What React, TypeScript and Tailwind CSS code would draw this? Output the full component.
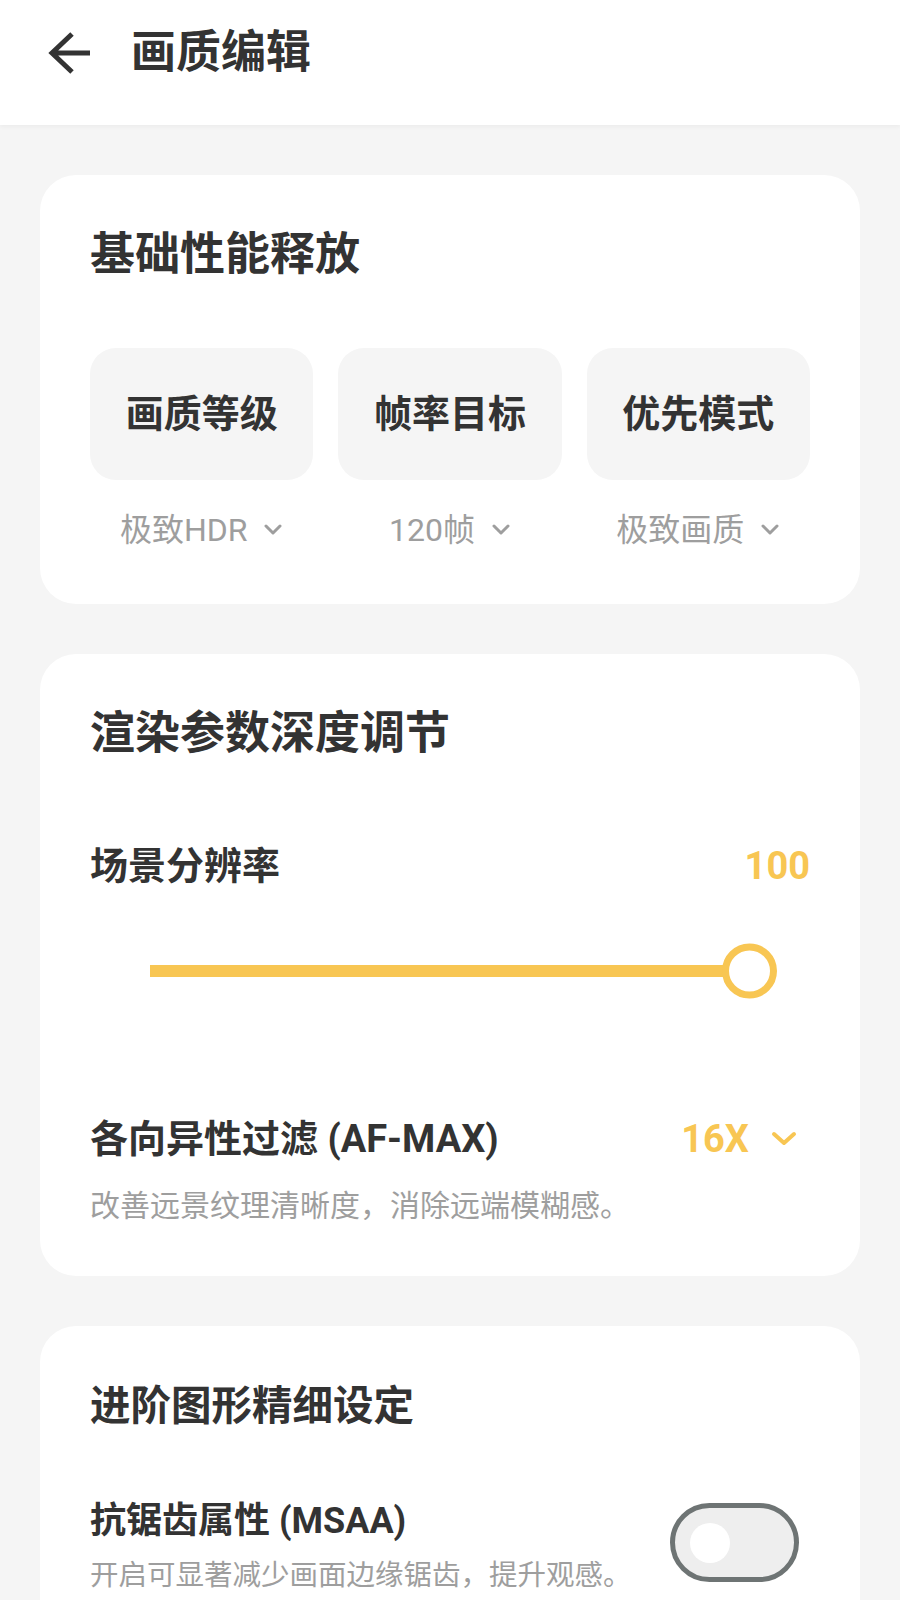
import React from "react";

const FONT = { fontFamily: 'Roboto, "Noto Sans CJK SC", "Noto Sans", sans-serif' };

function Chevron({ className = "" }: { className?: string }) {
  return (
    <svg width="20" height="12" viewBox="0 0 20 12" className={className} fill="none">
      <path d="M3 2 L10 9 L17 2" stroke="#9e9e9e" strokeWidth="3" strokeLinecap="round" strokeLinejoin="round" />
    </svg>
  );
}

function Tile({ label, value }: { label: string; value: string }) {
  return (
    <div className="flex flex-col">
      <div className="h-[132px] rounded-[26px] bg-[#f5f5f5] flex items-center justify-center text-[38px] font-bold text-[#333333]">
        {label}
      </div>
      <div className="mt-[30px] h-[40px] flex items-center justify-center gap-[16px] text-[32px] leading-[40px] text-[#9e9e9e]">
        <span>{value}</span>
        <Chevron />
      </div>
    </div>
  );
}

export default function App() {
  return (
    <div className="min-h-screen bg-[#f5f5f5]" style={FONT}>
      <header className="relative z-10 h-[125px] bg-white flex items-center pl-[48px] pb-[20px] shadow-[0_2px_4px_rgba(0,0,0,0.04)]">
        <svg width="44" height="44" viewBox="0 0 44 44" fill="none">
          <path d="M24 3 L4 22 L24 41 M4 22 H42" stroke="#333333" strokeWidth="5" strokeLinejoin="miter" />
        </svg>
        <h1 className="ml-[39px] text-[45px] leading-[60px] font-bold text-[#333333]">画质编辑</h1>
      </header>

      <main className="px-[40px] pt-[50px] pb-[40px] flex flex-col gap-[50px]">
        {/* Card 1 */}
        <section className="bg-white rounded-[36px] px-[50px] pt-[50px] pb-[54px]">
          <h2 className="h-[60px] text-[45px] leading-[60px] font-bold text-[#333333]">基础性能释放</h2>
          <div className="mt-[63px] grid grid-cols-3 gap-[25px]">
            <Tile label="画质等级" value="极致HDR" />
            <Tile label="帧率目标" value="120帧" />
            <Tile label="优先模式" value="极致画质" />
          </div>
        </section>

        {/* Card 2 */}
        <section className="bg-white rounded-[36px] px-[50px] pt-[50px] pb-[50px]">
          <h2 className="h-[60px] text-[45px] leading-[60px] font-bold text-[#333333]">渲染参数深度调节</h2>
          <div className="mt-[77px] h-[50px] flex items-center justify-between">
            <span className="text-[38px] font-bold text-[#333333]">场景分辨率</span>
            <span className="text-[38px] font-bold text-[#f8c653]">100</span>
          </div>
          <div className="mt-[50px] mx-[60px] h-[60px] relative flex items-center">
            <div className="w-full h-[12px] bg-[#f8c653]" />
            <div className="absolute right-[-27px] top-1/2 -translate-y-1/2 w-[55px] h-[55px] rounded-full border-[7px] border-[#f8c653] bg-white" />
          </div>
          <div className="mt-[113px] h-[50px] flex items-center justify-between">
            <span className="text-[38px] font-bold text-[#333333]">各向异性过滤 (AF-MAX)</span>
            <span className="flex items-center gap-[22px] pr-[13px]">
              <span className="text-[38px] font-bold text-[#f8c653]">16X</span>
              <svg width="26" height="16" viewBox="0 0 26 16" fill="none">
                <path d="M3 3 L13 12 L23 3" stroke="#f8c653" strokeWidth="4" strokeLinecap="round" strokeLinejoin="round" />
              </svg>
            </span>
          </div>
          <p className="mt-[22px] text-[30px] leading-[40px] text-[#9e9e9e]">改善远景纹理清晰度，消除远端模糊感。</p>
        </section>

        {/* Card 3 */}
        <section className="bg-white rounded-[36px] px-[50px] pt-[50px] pb-[50px]">
          <h2 className="h-[60px] text-[40.5px] leading-[60px] font-bold text-[#333333]">进阶图形精细设定</h2>
          <div className="mt-[60px] flex items-start justify-between">
            <div className="flex flex-col">
              <span className="h-[50px] leading-[50px] text-[36px] font-bold text-[#333333]">抗锯齿属性 (MSAA)</span>
              <span className="mt-[10px] text-[28.5px] leading-[40px] text-[#9e9e9e]">开启可显著减少画面边缘锯齿，提升观感。</span>
            </div>
            <div className="mt-[7px] mr-[11px] w-[129px] h-[79px] rounded-full border-[5px] border-[#6e7474] bg-[#eeeeee] flex items-center pl-[15px]">
              <div className="w-[40px] h-[40px] rounded-full bg-white" />
            </div>
          </div>
        </section>
      </main>
    </div>
  );
}
